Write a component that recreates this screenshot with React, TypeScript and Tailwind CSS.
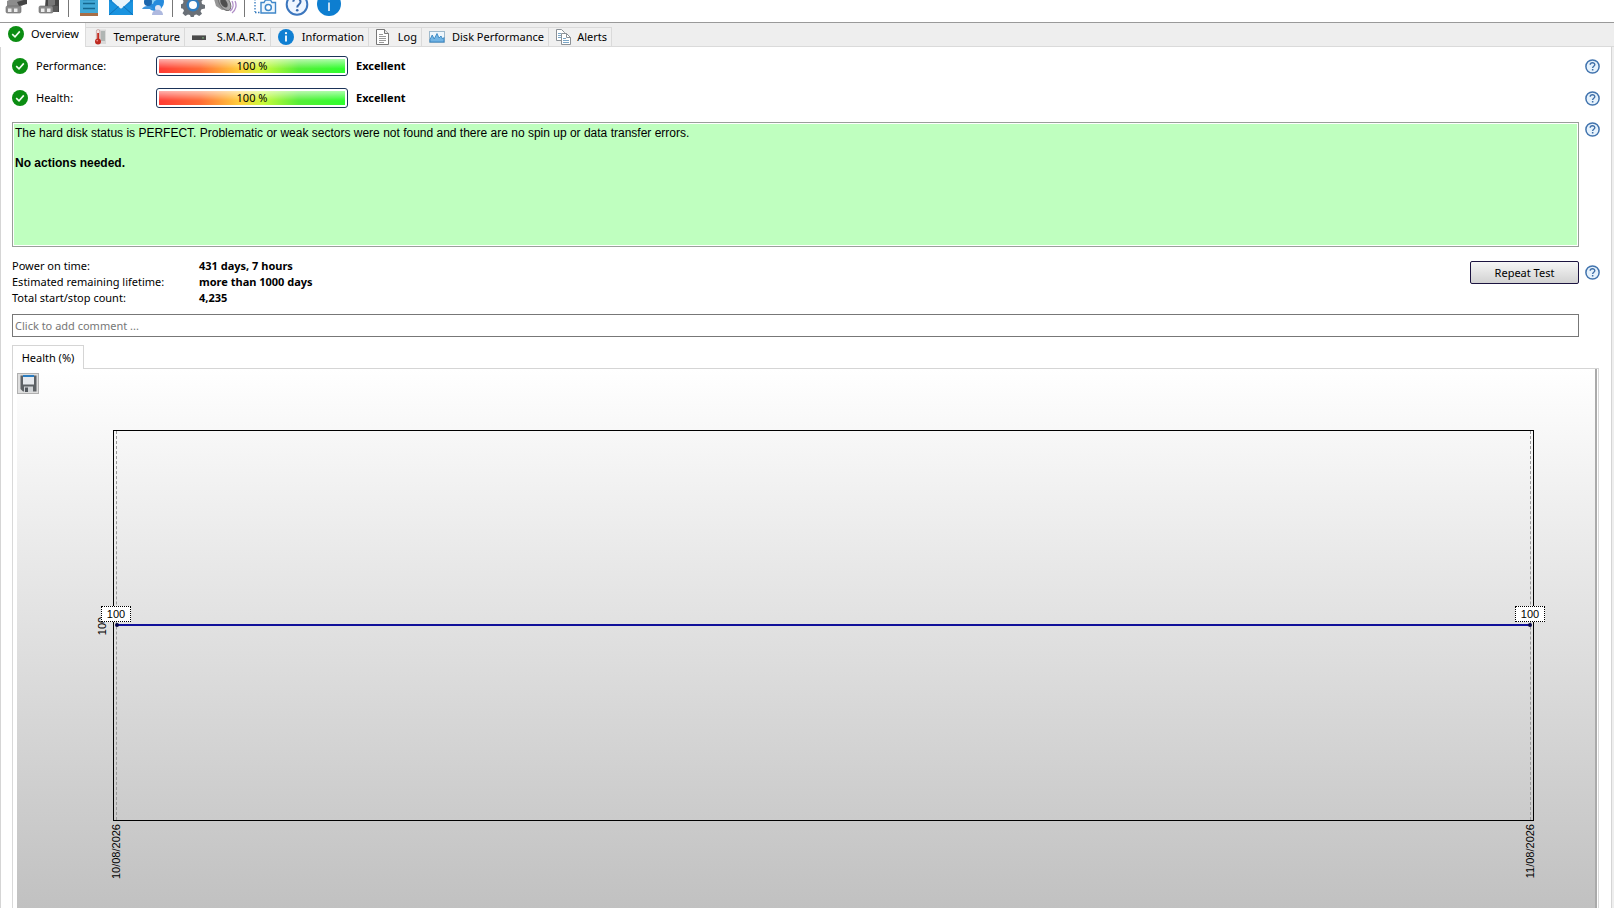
import React from "react";

const ui = "font-['Noto_Sans','Open_Sans',sans-serif]";
const arial = "font-['Liberation_Sans',Arial,sans-serif]";

function CheckIcon() {
  return (
    <svg width="16" height="16" viewBox="0 0 16 16" className="shrink-0" aria-hidden="true">
      <circle cx="8" cy="8" r="8" fill="#0b8d12" />
      <path d="M4.2 8.2 7 10.9 11.8 5.4" fill="none" stroke="#f2fff0" strokeWidth="1.6" />
    </svg>
  );
}

function InfoDot() {
  return (
    <svg width="16" height="16" viewBox="0 0 16 16" className="shrink-0" aria-hidden="true">
      <circle cx="8" cy="8" r="8" fill="#0f7fd2" />
      <path d="M8 6.6V12.4" stroke="#fff" strokeWidth="1.8" />
      <circle cx="8" cy="4.2" r="1.1" fill="#fff" />
    </svg>
  );
}

function ThermometerIcon() {
  return (
    <svg width="14" height="16" viewBox="0 0 14 16" className="shrink-0" aria-hidden="true">
      <rect x="6" y="0.5" width="7" height="14.5" fill="#d9d9d9" />
      <path d="M8 3h4M8 5h4M8 7h4M8 9h4M8 11h4" stroke="#7d8a86" strokeWidth="0.9" />
      <rect x="3.4" y="0.5" width="3.4" height="11" rx="1.7" fill="#f3e4e1" stroke="#a77" strokeWidth="0.5" />
      <rect x="4.2" y="4" width="1.8" height="8" fill="#c42d22" />
      <circle cx="5" cy="12.4" r="3" fill="#bd2a20" />
      <circle cx="4.2" cy="11.6" r="0.9" fill="#e88" />
    </svg>
  );
}

function DriveIcon() {
  return (
    <svg width="14" height="16" viewBox="0 0 14 16" className="shrink-0" aria-hidden="true">
      <rect x="0" y="6" width="14" height="5" fill="#4b4b4b" />
      <rect x="0" y="6" width="14" height="1" fill="#8a8a8a" />
      <rect x="10" y="8.4" width="2" height="1" fill="#7eb37e" />
    </svg>
  );
}

function PageIcon() {
  return (
    <svg width="13" height="16" viewBox="0 0 13 16" className="shrink-0" aria-hidden="true">
      <path d="M.5.5h8l4 4v11H.5z" fill="#fff" stroke="#777" />
      <path d="M8.5.5v4h4" fill="#e5e5e5" stroke="#777" />
      <path d="M3 5.5h4M3 7.5h7M3 9.5h7M3 11.5h7M3 13.5h5" stroke="#9a9a9a" />
    </svg>
  );
}

function PerfIcon() {
  return (
    <svg width="16" height="14" viewBox="0 0 16 14" className="shrink-0" aria-hidden="true">
      <rect x=".5" y="1.5" width="15" height="11" fill="#eef6fc" stroke="#9eb9cc" />
      <path d="M1 12V9.5L3.2 5 5.2 9 8 3.5 10 8 12 6 13.5 9 15 7.5V12z" fill="#72b4e4" stroke="#2d7fbd" strokeWidth=".8" />
    </svg>
  );
}

function CopyIcon() {
  return (
    <svg width="15" height="16" viewBox="0 0 15 16" className="shrink-0" aria-hidden="true">
      <path d="M.5.5h5l3 3v8h-8z" fill="#fff" stroke="#8b9196" />
      <path d="M2 4.5h3M2 6.5h3M2 8.5h3" stroke="#7ba6c6" />
      <path d="M5.500 4.500h5l4 4v7h-9z" fill="#fff" stroke="#8b9196" />
      <path d="M10.500 4.500v4h4" fill="none" stroke="#8b9196" />
      <path d="M7 9.500h3M7 11.500h6M7 13.500h6" stroke="#7ba6c6" />
    </svg>
  );
}

function HelpButton({ label }: { label: string }) {
  return (
    <button type="button" aria-label={label} className="block shrink-0">
      <svg width="15" height="15" viewBox="0 0 15 15" aria-hidden="true">
        <circle cx="7.500" cy="7.500" r="6.600" fill="#e6f2fc" stroke="#4274ae" strokeWidth="1.500" />
        <path d="M5.200 5.800C5.200 3 9.900 3.100 9.800 5.700 9.700 7.200 7.600 7.300 7.600 9" fill="none" stroke="#3f6fa8" strokeWidth="1.400" />
        <rect x="6.900" y="10" width="1.500" height="1.500" fill="#3f6fa8" />
      </svg>
    </button>
  );
}

const glyphs: Record<string, React.ReactNode> = {
  disk: (
    <>
      <path d="M2 8 10 4 22 6v4l-9 5H2z" fill="#8c8c8c" />
      <path d="M12 9 22 6v5l-8 2z" fill="#444" />
      <rect x="1" y="13" width="15" height="7" rx="1.500" fill="#8e8e8e" stroke="#666" strokeWidth=".6" />
      <rect x="3" y="15.500" width="3.500" height="3.500" fill="#ececec" />
      <rect x="9" y="15.500" width="3.500" height="3.500" fill="#ececec" />
    </>
  ),
  disks: (
    <>
      <path d="M9 2h10l3 3v14h-8L8 14z" fill="#454545" />
      <path d="M11 3h7v9l-7 2z" fill="#777" />
      <rect x="2" y="13" width="14" height="7" rx="1.500" fill="#8c8c8c" stroke="#666" strokeWidth=".6" />
      <path d="M16 13h5v6h-5z" fill="#5a5a5a" />
      <rect x="4" y="15.500" width="3.500" height="3.500" fill="#ececec" />
      <rect x="10" y="15.500" width="3.500" height="3.500" fill="#ececec" />
    </>
  ),
  notes: (
    <>
      <rect x="3" y="0" width="18" height="21" fill="#42a9d7" />
      <rect x="3" y="20" width="18" height="3" fill="#a86e47" />
      <path d="M6 6.500h12M6 10.500h12M6 15.500h12" stroke="#15678f" strokeWidth="1.300" />
    </>
  ),
  mail: (
    <>
      <rect x="0" y="4" width="24" height="18" fill="#1686d2" />
      <path d="M3 0h18v8l-9 8-9-8z" fill="#e9f4fb" />
      <path d="M0 8 12 16 24 8v14H0z" fill="#1a93df" />
      <path d="M0 22 9.500 13.500M24 22 14.500 13.500" stroke="#0f6fb5" />
    </>
  ),
  network: (
    <>
      <circle cx="14" cy="9" r="9" fill="#268bdd" />
      <path d="M8 5c4-3 8-1 11-2-1 5-6 3-7 8-2 0-4-3-4-6z" fill="#8bd0f5" />
      <circle cx="7" cy="9" r="4" fill="#1c66ad" />
      <path d="M1 16c2-4 9-4 11 0z" fill="#3e94db" />
      <circle cx="17" cy="15" r="3" fill="#dfe4f4" />
      <path d="M11 22c0-7 11-7 11 0z" fill="#aeb9df" />
    </>
  ),
  gear: (
    <>
      <path
        d="M10 0h4l1 3 2 1 3-1.500 2.500 3.500-2 2.500.5 2.500 3 1v3.500l-3.500.8-1 2 1.500 2.500-2.800 2.200-2.700-1.500-2 .5-1 2.500H10l-1-2.500-2-.5-2.700 1.500L1.500 20.300 3 17.800l-1-2-2.500-.8V11.500l2.500-1 .5-2.500-2-2.500L3.500 2.500 7 4l2-1z"
        fill="#6a7077"
      />
      <circle cx="12" cy="12" r="6.500" fill="#2f7cbf" />
      <circle cx="12" cy="12" r="4" fill="#fff" />
    </>
  ),
  speaker: (
    <>
      <path d="M1 6 8 1l9 15-8 1-6-4z" fill="#969696" />
      <ellipse cx="11.500" cy="9.500" rx="5" ry="9" transform="rotate(-32 11.500 9.500)" fill="#a5a5a5" stroke="#747474" />
      <ellipse cx="11" cy="10" rx="3" ry="5" transform="rotate(-32 11 10)" fill="#4e4e4e" />
      <path d="M17 18c3-2 4-6 2-10M19 20c4-3 5-8 3-12" fill="none" stroke="#b08fc8" strokeWidth="1.300" />
    </>
  ),
  snapshot: (
    <>
      <path d="M2 0v19M2 19.500h6" stroke="#3379bd" strokeWidth="1.300" strokeDasharray="1.500 1.500" />
      <path d="M8 9.500h3l1.500-2.500h5L19 9.500h3.500v10.500H8z" fill="#eff7fd" stroke="#3f87c9" strokeWidth="1.400" />
      <circle cx="15.300" cy="14.500" r="3" fill="#fff" stroke="#3f87c9" strokeWidth="1.500" />
    </>
  ),
  help: (
    <>
      <circle cx="12" cy="11.500" r="10.300" fill="#eff6ff" stroke="#3b76be" strokeWidth="2" />
      <path d="M8.300 8.800C8.500 4 15.800 4.500 15.500 9 15.300 11.500 12.200 11.500 12.200 14.500" fill="none" stroke="#3969ac" strokeWidth="2" />
      <circle cx="12.200" cy="17.300" r="1.300" fill="#3969ac" />
    </>
  ),
  info: (
    <>
      <circle cx="12" cy="11" r="12" fill="#0d7ed0" />
      <path d="M12 9.500V18" stroke="#fff" strokeWidth="1.500" />
      <circle cx="12" cy="6" r="1.200" fill="#fff" />
    </>
  ),
};

function Tool({ name, label }: { name: string; label: string }) {
  return (
    <button type="button" aria-label={label} className="block shrink-0">
      <svg width="24" height="24" viewBox="0 0 24 24" aria-hidden="true">
        {glyphs[name]}
      </svg>
    </button>
  );
}

function Toolbar() {
  const rule = <div className="-ml-px h-6 w-px shrink-0 bg-[#777]" />;
  return (
    <header className="flex h-[23px] shrink-0 items-end gap-2 overflow-hidden border-b border-[#999] bg-white pb-[5px] pl-[5px]">
      <Tool name="disk" label="Previous disk" />
      <Tool name="disks" label="Next disk" />
      {rule}
      <Tool name="notes" label="Report" />
      <Tool name="mail" label="Send mail" />
      <Tool name="network" label="Network" />
      {rule}
      <Tool name="gear" label="Settings" />
      <Tool name="speaker" label="Sound" />
      {rule}
      <Tool name="snapshot" label="Save snapshot" />
      <Tool name="help" label="Help" />
      <Tool name="info" label="About" />
    </header>
  );
}

const tabs = [
  { label: "Temperature", icon: <ThermometerIcon />, width: "w-[99px]" },
  { label: "S.M.A.R.T.", icon: <DriveIcon />, width: "w-[86px]" },
  { label: "Information", icon: <InfoDot />, width: "w-[98px]" },
  { label: "Log", icon: <PageIcon />, width: "w-[53px]" },
  { label: "Disk Performance", icon: <PerfIcon />, width: "w-[127px]" },
  { label: "Alerts", icon: <CopyIcon />, width: "w-[63px]" },
];

function TabStrip() {
  return (
    <nav role="tablist" className="flex h-6 shrink-0 items-end bg-[#eee]">
      <button type="button" role="tab" aria-selected="true" className="flex h-6 w-[86px] items-center justify-between border-r border-[#dcdcdc] bg-white pr-1.5 pb-0.5 pl-2">
        <CheckIcon />
        Overview
      </button>
      {tabs.map((t) => (
        <button
          key={t.label}
          type="button"
          role="tab"
          aria-selected="false"
          className={`flex h-5 items-center justify-between border-t border-r border-b border-[#dadada] bg-[#f0f0f0] pr-1 pl-[7px] whitespace-nowrap ${t.width}`}
        >
          {t.icon}
          {t.label}
        </button>
      ))}
      <div className="h-5 grow border-b border-[#dadada]" />
    </nav>
  );
}

function Meter({ label }: { label: string }) {
  return (
    <div className="flex h-8 items-center">
      <CheckIcon />
      <span className="ml-2 w-[120px]">{label}:</span>
      <div
        role="meter"
        aria-label={label}
        aria-valuenow={100}
        className="flex h-5 w-48 rounded-[3px] border border-[#1b3358] bg-white p-0.5"
      >
        <div className="relative flex grow items-center justify-center bg-[linear-gradient(to_right,#ff3b35,#ff6a35_22%,#ffd23c_44%,#c8fa3c_56%,#55ee38_75%,#2dff2d)]">
          <div className="absolute inset-0 bg-linear-to-b from-white/60 to-white/0 to-70%" />
          <span className="relative">100 %</span>
        </div>
      </div>
      <b className="ml-2 grow">Excellent</b>
      <HelpButton label={`About ${label}`} />
    </div>
  );
}

const facts = [
  ["Power on time:", "431 days, 7 hours"],
  ["Estimated remaining lifetime:", "more than 1000 days"],
  ["Total start/stop count:", "4,235"],
];

function ValueTag() {
  return <span className="flex h-4 w-[30px] items-center justify-center border border-dotted border-black bg-white">100</span>;
}

function HealthChart() {
  return (
    <section aria-label="Health chart" className={`relative ml-1 mr-px flex grow flex-col border-r-2 border-[#aaa] bg-linear-to-b from-white to-[#c1c1c1] text-[11px] leading-4 ${arial}`}>
      <button type="button" aria-label="Save chart" className="mt-1 flex h-[21px] w-[22px] items-center justify-center border border-[#b0b0b0] bg-[#dedede]">
        <svg width="17" height="17" viewBox="0 0 17 17" aria-hidden="true">
          <path d="M.5.500h16v16H3L.5 14z" fill="#5d6165" />
          <rect x="3" y="0" width="11" height="2" fill="#2c7dc0" />
          <rect x="3" y="2" width="11" height="7.500" fill="#e6e9ed" />
          <rect x="4" y="11.500" width="9" height="5.500" fill="#d0d3d6" />
          <rect x="5" y="12.500" width="3" height="4.500" fill="#52575c" />
        </svg>
      </button>
      <div className="relative mt-9 mr-[61px] mb-[87px] ml-24 grow border border-black">
        <div className="absolute inset-y-0 left-0.5 border-l border-dashed border-[#999]" />
        <div className="absolute inset-y-0 right-0.5 border-l border-dashed border-[#999]" />
        <div className="absolute top-1/2 -left-5 -translate-y-1/2 rotate-180 [writing-mode:vertical-rl]">100</div>
        <div className="absolute inset-x-0.5 bottom-1/2 h-0.5 bg-[#10109a]" />
        <div className="absolute bottom-1/2 left-px -mb-px size-1 rounded-full bg-[#05054a]" />
        <div className="absolute right-px bottom-1/2 -mb-px size-1 rounded-full bg-[#05054a]" />
        <div className="absolute bottom-1/2 -left-[13px] pb-1">
          <ValueTag />
        </div>
        <div className="absolute -right-3 bottom-1/2 pb-1">
          <ValueTag />
        </div>
        <div className="absolute top-full -left-1.5 mt-1 rotate-180 [writing-mode:vertical-rl]">10/08/2026</div>
        <div className="absolute top-full -right-[5px] mt-1 rotate-180 [writing-mode:vertical-rl]">11/08/2026</div>
      </div>
    </section>
  );
}

export default function App() {
  return (
    <div className={`flex min-h-screen flex-col bg-[#eee] text-[11px] leading-4 text-black ${ui}`}>
      <Toolbar />
      <TabStrip />
      <main className="mr-0.5 flex grow flex-col border-x border-[#d5d5d5] bg-white pt-[3px] pl-[11px]">
        <div className="pr-[11px]">
          <Meter label="Performance" />
          <Meter label="Health" />
          <div className="mt-2 flex items-start gap-1.5">
            <div className={`h-[125px] grow border border-[#9a9f9a] bg-[#bfffbf] px-0.5 py-[3px] text-[12px] leading-[15px] ring-1 ring-white ring-inset ${arial}`}>
              <p>The hard disk status is PERFECT. Problematic or weak sectors were not found and there are no spin up or data transfer errors.</p>
              <p className="mt-[15px] font-bold">No actions needed.</p>
            </div>
            <HelpButton label="About status" />
          </div>
          <div className="mt-[11px] flex items-start gap-1.5">
            <dl className="grow">
              {facts.map(([k, v]) => (
                <div key={k} className="flex">
                  <dt className="w-[187px]">{k}</dt>
                  <dd className="font-bold">{v}</dd>
                </div>
              ))}
            </dl>
            <div className="flex items-center gap-1.5 pt-[3px]">
              <button type="button" className="h-[23px] w-[109px] rounded-[2px] border border-[#1c1440] bg-linear-to-b from-[#f6f6f6] to-[#d2d2d2]">
                Repeat Test
              </button>
              <HelpButton label="About repeat test" />
            </div>
          </div>
          <input
            aria-label="Comment"
            placeholder="Click to add comment ..."
            className="mt-2 mr-[21px] block h-[23px] w-[calc(100%-21px)] border border-[#777] bg-white px-0.5 placeholder:text-[#777]"
          />
        </div>
        <div className="mt-2 flex items-end">
          <button type="button" role="tab" aria-selected="true" className="h-6 w-[72px] border-x border-t border-[#d5d5d5]">
            Health (%)
          </button>
          <div className="mr-3 grow border-b border-[#d5d5d5]" />
        </div>
        <div className="mr-3 flex grow flex-col border-x border-[#d9d9d9]">
          <HealthChart />
        </div>
      </main>
    </div>
  );
}
